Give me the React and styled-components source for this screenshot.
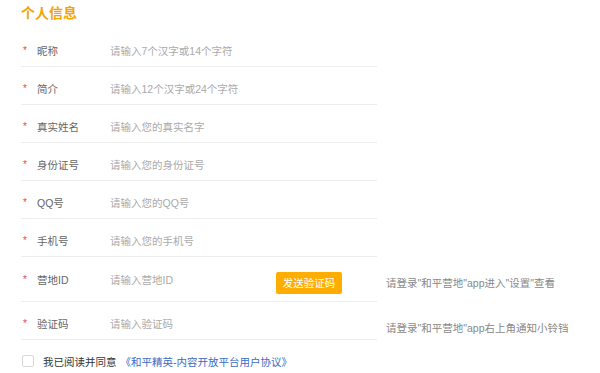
import React, { useState } from "react";
import styled, { createGlobalStyle } from "styled-components";

const GlobalStyle = createGlobalStyle`
  html, body {
    margin: 0;
    padding: 0;
    background: #fff;
  }
  body {
    font-family: "Liberation Sans", "Noto Sans CJK SC", sans-serif;
  }
`;

const fields = [
  { label: "昵称", placeholder: "请输入7个汉字或14个字符" },
  { label: "简介", placeholder: "请输入12个汉字或24个字符" },
  { label: "真实姓名", placeholder: "请输入您的真实名字" },
  { label: "身份证号", placeholder: "请输入您的身份证号" },
  { label: "QQ号", placeholder: "请输入您的QQ号" },
  { label: "手机号", placeholder: "请输入您的手机号" },
  {
    label: "营地ID",
    placeholder: "请输入营地ID",
    tall: true,
    button: "发送验证码",
    hint: "请登录\"和平营地\"app进入\"设置\"查看",
  },
  {
    label: "验证码",
    placeholder: "请输入验证码",
    hint: "请登录\"和平营地\"app右上角通知小铃铛",
  },
];

function App() {
  const [agreed, setAgreed] = useState(false);

  return (
    <>
      <GlobalStyle />
      <Page>
        <Title>个人信息</Title>
        {fields.map((f) => (
          <FormRow key={f.label}>
            <Field $tall={f.tall}>
              <Star>*</Star>
              <Label>{f.label}</Label>
              <Input placeholder={f.placeholder} />
              {f.button && <SendButton>{f.button}</SendButton>}
            </Field>
            {f.hint && <Hint>{f.hint}</Hint>}
          </FormRow>
        ))}
        <Agree>
          <Checkbox
            type="checkbox"
            checked={agreed}
            onChange={() => setAgreed(!agreed)}
          />
          <span>我已阅读并同意</span>
          <AgreeLink href="#">《和平精英-内容开放平台用户协议》</AgreeLink>
        </Agree>
      </Page>
    </>
  );
}

export default App;

const Page = styled.div`
  padding: 3px 0 0 21px;
`;

const Title = styled.h2`
  margin: 0 0 6px 0;
  font-size: 14px;
  line-height: 20px;
  font-weight: bold;
  color: #f5a300;
`;

const FormRow = styled.div`
  display: flex;
  align-items: flex-start;
`;

const Field = styled.div`
  box-sizing: border-box;
  flex: none;
  width: 356px;
  height: ${(p) => (p.$tall ? "45px" : "38px")};
  padding-top: ${(p) => (p.$tall ? "8px" : "7px")};
  display: flex;
  align-items: flex-start;
  border-bottom: 1px solid #ededed;
  font-size: 10.5px;
  line-height: 30px;
`;

const Star = styled.span`
  width: 16px;
  padding-left: 2px;
  box-sizing: border-box;
  color: #e84a4a;
  font-size: 10px;
`;

const Label = styled.span`
  width: 73px;
  color: #666;
`;

const Input = styled.input`
  width: 166px;
  height: 30px;
  padding: 0;
  border: none;
  outline: none;
  background: transparent;
  font-family: inherit;
  font-size: 10.5px;
  color: #333;
  &::placeholder {
    color: #aaa;
  }
`;

const SendButton = styled.button`
  margin-top: 7px;
  width: 66px;
  height: 22px;
  padding: 0;
  border: none;
  border-radius: 2px;
  background: #ffad00;
  color: #fff;
  font-family: inherit;
  font-size: 10.5px;
  line-height: 22px;
  cursor: pointer;
`;

const Hint = styled.div`
  margin-left: 9px;
  padding-top: 16px;
  font-size: 10.5px;
  line-height: 20px;
  color: #888;
  white-space: nowrap;
`;

const Agree = styled.label`
  display: flex;
  align-items: center;
  height: 12px;
  margin-top: 15px;
  font-size: 10.5px;
  color: #333;
  span {
    margin-left: 9px;
  }
`;

const Checkbox = styled.input`
  appearance: none;
  margin: 0 0 0 1px;
  width: 12px;
  height: 12px;
  border: 1px solid #d8d8d8;
  border-radius: 2px;
  background: #fff;
  &:checked {
    background: #ffad00;
    border-color: #ffad00;
  }
`;

const AgreeLink = styled.a`
  margin-left: 4px;
  color: #3a6bc4;
  text-decoration: none;
`;
